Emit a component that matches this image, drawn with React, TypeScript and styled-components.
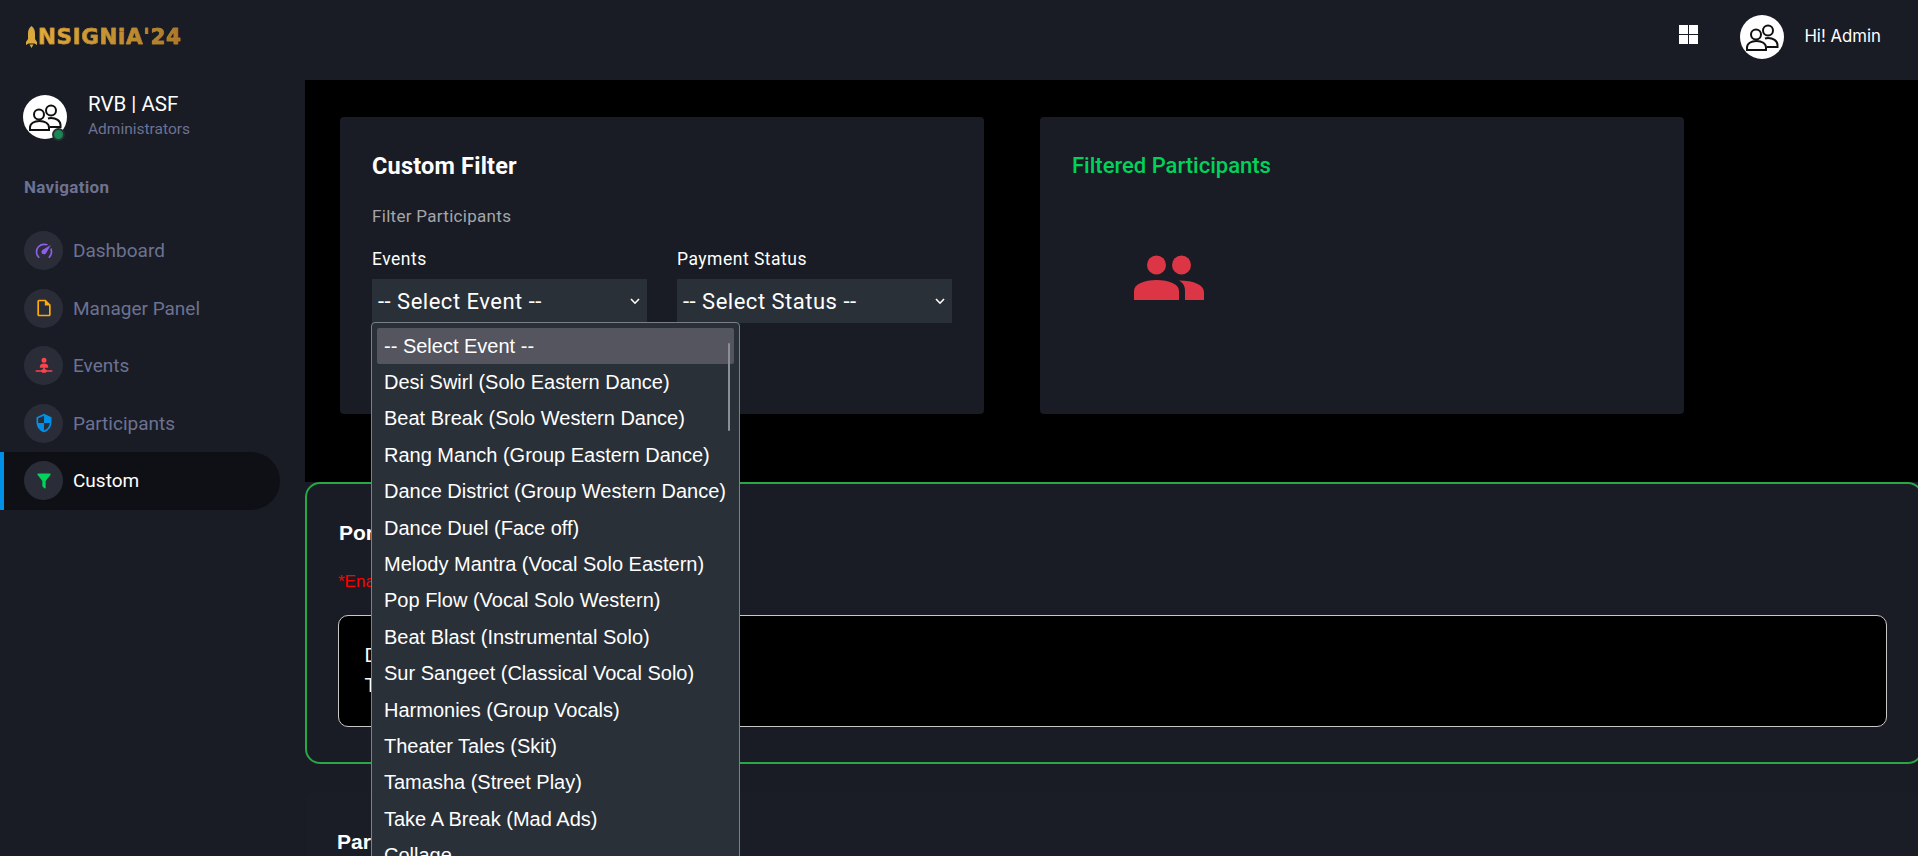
import React from "react";
import styled, { createGlobalStyle } from "styled-components";

const GlobalStyle = createGlobalStyle`
  html, body {
    margin: 0;
    padding: 0;
    height: 856px;
    overflow: hidden;
    background: #000;
    font-family: Roboto, "Liberation Sans", sans-serif;
  }
  * { box-sizing: border-box; }
`;

const navItems = [
  {
    label: "Dashboard",
    color: "#8f5fe8",
    path: "M12,16A3,3 0 0,1 9,13C9,11.88 9.61,10.9 10.5,10.39L20.21,4.77L14.68,14.35C14.18,15.33 13.17,16 12,16M12,3C13.81,3 15.5,3.5 16.97,4.32L14.87,5.53C14,5.19 13,5 12,5A8,8 0 0,0 4,13C4,15.21 4.89,17.21 6.34,18.65H6.35C6.74,19.04 6.74,19.67 6.35,20.06C5.96,20.45 5.32,20.45 4.93,20.07V20.07C3.12,18.26 2,15.76 2,13A10,10 0 0,1 12,3M22,13C22,15.76 20.88,18.26 19.07,20.07V20.07C18.68,20.45 18.05,20.45 17.66,20.06C17.27,19.67 17.27,19.04 17.66,18.65V18.65C19.11,17.2 20,15.21 20,13C20,12 19.81,11 19.46,10.1L20.67,8C21.5,9.5 22,11.18 22,13Z",
  },
  {
    label: "Manager Panel",
    color: "#ffab00",
    path: "M14,2H6A2,2 0 0,0 4,4V20A2,2 0 0,0 6,22H18A2,2 0 0,0 20,20V8L14,2M18,20H6V4H13V9H18V20Z",
  },
  {
    label: "Events",
    color: "#fc424a",
    path: "M17,14H13V16H14A1,1 0 0,1 15,17H22V19H15A1,1 0 0,1 14,20H10A1,1 0 0,1 9,19H2V17H9A1,1 0 0,1 10,16H11V14H7V12.5C7,10.57 9.24,9 12,9C14.76,9 17,10.57 17,12.5V14M12,2A3,3 0 0,1 15,5A3,3 0 0,1 12,8A3,3 0 0,1 9,5A3,3 0 0,1 12,2Z",
  },
  {
    label: "Participants",
    color: "#0090e7",
    path: "M12,12H19C18.47,16.11 15.72,19.78 12,20.92V12H5V6.3L12,3.19M12,1L3,5V11C3,16.55 6.84,21.73 12,23C17.16,21.73 21,16.55 21,11V5L12,1Z",
  },
  {
    label: "Custom",
    color: "#00d25b",
    active: true,
    path: "M14,12V19.88C14.04,20.18 13.94,20.5 13.71,20.71C13.32,21.1 12.69,21.1 12.3,20.71L10.29,18.7C10.06,18.47 9.96,18.16 10,17.87V12H9.97L4.21,4.62C3.87,4.19 3.95,3.56 4.38,3.22C4.57,3.08 4.78,3 5,3V3H19V3C19.22,3 19.43,3.08 19.62,3.22C20.05,3.56 20.13,4.19 19.79,4.62L14.03,12H14Z",
  },
];

const eventOptions = [
  "-- Select Event --",
  "Desi Swirl (Solo Eastern Dance)",
  "Beat Break (Solo Western Dance)",
  "Rang Manch (Group Eastern Dance)",
  "Dance District (Group Western Dance)",
  "Dance Duel (Face off)",
  "Melody Mantra (Vocal Solo Eastern)",
  "Pop Flow (Vocal Solo Western)",
  "Beat Blast (Instrumental Solo)",
  "Sur Sangeet (Classical Vocal Solo)",
  "Harmonies (Group Vocals)",
  "Theater Tales (Skit)",
  "Tamasha (Street Play)",
  "Take A Break (Mad Ads)",
  "Collage",
];

const UserIcon = () => (
  <svg width="33" height="27" viewBox="0 0 33 27" fill="none" stroke="#111" strokeWidth="2">
    <circle cx="22" cy="6.500" r="5" />
    <path d="M19 14.500c1-.4 2-.5 3-.5 5 0 9.500 2.500 9.500 7V23H21" />
    <circle cx="10" cy="10.500" r="5" fill="#fff" />
    <path d="M1 26v-2.500C1 19.600 5 17 10.500 17s9.500 2.600 9.500 6.500V26z" fill="#fff" />
  </svg>
);

const Chevron = () => (
  <svg width="12" height="12" viewBox="0 0 12 12" fill="none" stroke="#fff" strokeWidth="1.6">
    <path d="M2 4l4 4.200L10 4" />
  </svg>
);

export default function App() {
  return (
    <>
      <GlobalStyle />
      <Page>
        <TopBar>
          <Logo>
            <svg width="11" height="22" viewBox="0 0 11 22" fill="#dba83d">
              <path d="M5.500 0C8 1.800 9 4.500 9 7.500V13l2 3v3l-2.500-1.500h-6L0 19v-3l2-3V7.500C2 4.500 3 1.800 5.500 0zM3.500 18.500h4L5.500 22z" />
            </svg>
            <LogoText>NSIGNiA'24</LogoText>
          </Logo>
          <TopActions>
            <GridIcon width="19" height="19" viewBox="0 0 19 19" fill="#fff">
              <rect x="0" y="0" width="9" height="9" />
              <rect x="10" y="0" width="9" height="9" />
              <rect x="0" y="10" width="9" height="9" />
              <rect x="10" y="10" width="9" height="9" />
            </GridIcon>
            <Avatar>
              <UserIcon />
            </Avatar>
            <Greeting>Hi! Admin</Greeting>
          </TopActions>
        </TopBar>
        <Body>
          <Sidebar>
            <Profile>
              <Avatar>
                <UserIcon />
                <OnlineDot />
              </Avatar>
              <ProfileText>
                <ProfileName>RVB | ASF</ProfileName>
                <ProfileRole>Administrators</ProfileRole>
              </ProfileText>
            </Profile>
            <NavTitle>Navigation</NavTitle>
            <NavList>
              {navItems.map((item) => (
                <NavItem key={item.label} $active={item.active}>
                  <NavIcon>
                    <svg width="20" height="20" viewBox="0 0 24 24" fill={item.color}>
                      <path d={item.path} />
                    </svg>
                  </NavIcon>
                  <NavLabel $active={item.active}>{item.label}</NavLabel>
                </NavItem>
              ))}
            </NavList>
          </Sidebar>
          <Main>
            <TopSection>
              <FilterCard>
                <CardTitle>Custom Filter</CardTitle>
                <CardHint>Filter Participants</CardHint>
                <FieldRow>
                  <Field>
                    <FieldLabel>Events</FieldLabel>
                    <SelectBox>
                      <span>-- Select Event --</span>
                      <Chevron />
                    </SelectBox>
                    <Dropdown>
                      <ScrollThumb />
                      {eventOptions.map((option, index) => (
                        <Option key={option} $selected={index === 0}>
                          {option}
                        </Option>
                      ))}
                    </Dropdown>
                  </Field>
                  <Field>
                    <FieldLabel>Payment Status</FieldLabel>
                    <SelectBox>
                      <span>-- Select Status --</span>
                      <Chevron />
                    </SelectBox>
                  </Field>
                </FieldRow>
              </FilterCard>
              <FilterCard>
                <ResultTitle>Filtered Participants</ResultTitle>
                <PeopleIcon width="70" height="45" viewBox="0 0 70 45" fill="#dc3545">
                  <circle cx="22.500" cy="10" r="9.500" />
                  <circle cx="47.500" cy="10" r="9.500" />
                  <path d="M0 45V36C0 29 10 25 22.500 25S45 29 45 36V45z" />
                  <path d="M45 25.500C60 25.500 70 30 70 37V45H51V36C51 31 49 28 45 25.500z" />
                </PeopleIcon>
              </FilterCard>
            </TopSection>
            <LowerSection>
              <PortalCard>
                <PortalTitle>Portal</PortalTitle>
                <Notice>*Enable</Notice>
                <MessageBox>
                  <div>Details</div>
                  <div>Total</div>
                </MessageBox>
              </PortalCard>
              <ListCard>
                <PortalTitle>Participants</PortalTitle>
              </ListCard>
            </LowerSection>
          </Main>
        </Body>
      </Page>
    </>
  );
}

const Page = styled.div`
  width: 1918px;
  height: 856px;
  overflow: hidden;
  display: flex;
  flex-direction: column;
  background: #000;
`;

const TopBar = styled.header`
  height: 80px;
  flex: none;
  display: flex;
  align-items: center;
  justify-content: space-between;
  padding: 0 37px 12px 26px;
  background: #191c24;
`;

const Logo = styled.div`
  display: flex;
  align-items: center;
  gap: 1px;
  margin-top: 6px;
`;

const LogoText = styled.span`
  font-family: "DejaVu Sans", sans-serif;
  font-weight: 700;
  font-size: 21.500px;
  letter-spacing: 0.6px;
  line-height: 22px;
  -webkit-text-stroke: 0.5px #b98a32;
  background: linear-gradient(90deg, #e2ab3a, #a9782a);
  -webkit-background-clip: text;
  background-clip: text;
  color: transparent;
`;

const TopActions = styled.div`
  display: flex;
  align-items: center;
  margin-top: 6px;
`;

const GridIcon = styled.svg`
  margin-right: 42px;
  margin-top: -5px;
`;

const Avatar = styled.div`
  position: relative;
  width: 44px;
  height: 44px;
  flex: none;
  border-radius: 50%;
  background: #fff;
  display: flex;
  align-items: center;
  justify-content: center;
`;

const Greeting = styled.span`
  margin-left: 20px;
  margin-top: -2px;
  color: #fff;
  font-family: Inter, sans-serif;
  font-size: 16.800px;
`;

const Body = styled.div`
  flex: 1;
  display: flex;
  min-height: 0;
`;

const Sidebar = styled.aside`
  width: 305px;
  flex: none;
  background: #191c24;
`;

const Profile = styled.div`
  display: flex;
  align-items: center;
  gap: 21px;
  padding: 14px 0 0 23px;
`;

const OnlineDot = styled.i`
  position: absolute;
  right: 2px;
  bottom: -2px;
  width: 13px;
  height: 13px;
  border-radius: 50%;
  background: #198754;
  border: 2px solid #2c2e33;
`;

const ProfileText = styled.div`
  display: flex;
  flex-direction: column;
  margin-top: -2px;
`;

const ProfileName = styled.div`
  color: #fff;
  font-size: 20.500px;
  line-height: 24px;
`;

const ProfileRole = styled.div`
  margin-top: 2px;
  color: #6c7293;
  font-size: 15.500px;
  line-height: 22px;
`;

const NavTitle = styled.div`
  margin: 37px 0 0 24px;
  color: #6c7293;
  font-size: 17px;
  font-weight: 700;
  letter-spacing: 0.3px;
  line-height: 20px;
`;

const NavList = styled.nav`
  margin-top: 25px;
  display: flex;
  flex-direction: column;
`;

const NavItem = styled.div<{ $active?: boolean }>`
  display: flex;
  align-items: center;
  gap: 10px;
  width: 280px;
  height: 57.500px;
  padding-left: ${(p) => (p.$active ? "20px" : "24px")};
  border-left: ${(p) => (p.$active ? "4px solid #0090e7" : "none")};
  border-radius: 0 29px 29px 0;
  background: ${(p) => (p.$active ? "#0f1015" : "transparent")};
`;

const NavIcon = styled.span`
  width: 39px;
  height: 39px;
  border-radius: 50%;
  background: #2a2d38;
  display: flex;
  align-items: center;
  justify-content: center;
`;

const NavLabel = styled.span<{ $active?: boolean }>`
  color: ${(p) => (p.$active ? "#fff" : "#6c7293")};
  font-size: 19px;
`;

const Main = styled.main`
  flex: 1;
  display: flex;
  flex-direction: column;
  min-width: 0;
`;

const TopSection = styled.section`
  height: 402px;
  flex: none;
  display: flex;
  gap: 56px;
  padding: 37px 0 0 35px;
  background: #000;
`;

const FilterCard = styled.div`
  width: 644px;
  height: 297px;
  padding: 36px 32px 0;
  border-radius: 4px;
  background: #191c24;
`;

const CardTitle = styled.h4`
  margin: 0;
  color: #fff;
  font-size: 23.500px;
  font-weight: 700;
  letter-spacing: 0.2px;
  line-height: 26px;
`;

const CardHint = styled.p`
  margin: 27px 0 0;
  color: #a4a6ab;
  font-size: 17px;
  letter-spacing: 0.3px;
  line-height: 20px;
`;

const FieldRow = styled.div`
  display: flex;
  gap: 30px;
  margin-top: 23px;
`;

const Field = styled.div`
  position: relative;
  width: 275px;
`;

const FieldLabel = styled.div`
  color: #fff;
  font-size: 17.500px;
  letter-spacing: 0.5px;
  line-height: 20px;
  margin-bottom: 10px;
`;

const SelectBox = styled.div`
  height: 44px;
  display: flex;
  align-items: center;
  justify-content: space-between;
  padding: 0 6px;
  background: #2a3038;
  color: #fff;
  font-size: 22px;
  letter-spacing: 0.5px;
`;

const Dropdown = styled.div`
  position: absolute;
  z-index: 5;
  left: -1px;
  top: 73px;
  width: 369px;
  height: 600px;
  padding: 5px;
  border: 1px solid #7c7f85;
  border-radius: 4px;
  background: #2a3038;
  font-family: "Liberation Sans", Arial, sans-serif;
`;

const ScrollThumb = styled.i`
  position: absolute;
  right: 9px;
  top: 20px;
  width: 2px;
  height: 88px;
  background: #8b8e93;
  border-radius: 1px;
`;

const Option = styled.div<{ $selected?: boolean }>`
  height: 36.400px;
  display: flex;
  align-items: center;
  padding-left: 7px;
  color: #fff;
  font-size: 20px;
  white-space: nowrap;
  border-radius: 2px;
  background: ${(p) => (p.$selected ? "#54555f" : "transparent")};
`;

const ResultTitle = styled.h5`
  margin: 0;
  color: #00d25b;
  font-size: 22px;
  font-weight: 500;
  line-height: 26px;
`;

const PeopleIcon = styled.svg`
  display: block;
  margin: 76px 0 0 62px;
`;

const LowerSection = styled.section`
  flex: 1;
  overflow: hidden;
  background: #191c24;
`;

const PortalCard = styled.div`
  height: 282px;
  margin-right: -5px;
  padding: 36px 34px 0 31px;
  border: 2px solid #28a745;
  border-radius: 15px;
  font-family: "Liberation Sans", Arial, sans-serif;
`;

const PortalTitle = styled.h4`
  margin: 0;
  padding-left: 1px;
  color: #fff;
  font-size: 21px;
  font-weight: 700;
  line-height: 26px;
`;

const Notice = styled.p`
  margin: 25px 0 0;
  color: #ff0000;
  font-size: 17px;
  line-height: 22px;
`;

const MessageBox = styled.div`
  margin-top: 22px;
  height: 112px;
  padding: 24px 25.500px 0;
  border: 1px solid #c8c8c8;
  border-radius: 10px;
  background: #000;
  color: #fff;
  font-size: 20px;
  line-height: 30px;
`;

const ListCard = styled.div`
  margin: 29px 0 0 1px;
  padding: 36px 30px 0;
  height: 120px;
  background: #1a1d25;
  border-radius: 4px;
  font-family: "Liberation Sans", Arial, sans-serif;
`;
